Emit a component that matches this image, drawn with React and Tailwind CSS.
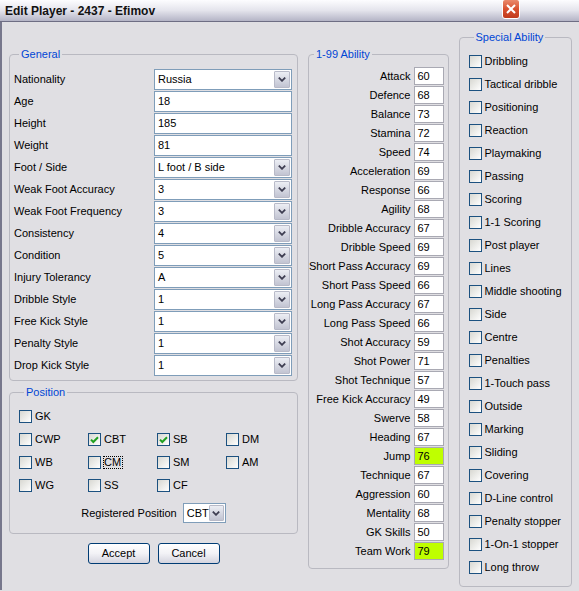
const general = [
  { label: "Nationality", value: "Russia", drop: true },
  { label: "Age", value: "18" },
  { label: "Height", value: "185" },
  { label: "Weight", value: "81" },
  { label: "Foot / Side", value: "L foot / B side", drop: true },
  { label: "Weak Foot Accuracy", value: "3", drop: true },
  { label: "Weak Foot Frequency", value: "3", drop: true },
  { label: "Consistency", value: "4", drop: true },
  { label: "Condition", value: "5", drop: true },
  { label: "Injury Tolerancy", value: "A", drop: true },
  { label: "Dribble Style", value: "1", drop: true },
  { label: "Free Kick Style", value: "1", drop: true },
  { label: "Penalty Style", value: "1", drop: true },
  { label: "Drop Kick Style", value: "1", drop: true },
];

const abilities = [
  ["Attack", 60], ["Defence", 68], ["Balance", 73], ["Stamina", 72],
  ["Speed", 74], ["Acceleration", 69], ["Response", 66], ["Agility", 68],
  ["Dribble Accuracy", 67], ["Dribble Speed", 69], ["Short Pass Accuracy", 69],
  ["Short Pass Speed", 66], ["Long Pass Accuracy", 67], ["Long Pass Speed", 66],
  ["Shot Accuracy", 59], ["Shot Power", 71], ["Shot Technique", 57],
  ["Free Kick Accuracy", 49], ["Swerve", 58], ["Heading", 67], ["Jump", 76, true],
  ["Technique", 67], ["Aggression", 60], ["Mentality", 68], ["GK Skills", 50],
  ["Team Work", 79, true],
];

const specials = [
  "Dribbling", "Tactical dribble", "Positioning", "Reaction", "Playmaking",
  "Passing", "Scoring", "1-1 Scoring", "Post player", "Lines", "Middle shooting",
  "Side", "Centre", "Penalties", "1-Touch pass", "Outside", "Marking", "Sliding",
  "Covering", "D-Line control", "Penalty stopper", "1-On-1 stopper", "Long throw",
];

const positions = [
  [["GK"]],
  [["CWP"], ["CBT", true], ["SB", true], ["DM"]],
  [["WB"], ["CM", false, true], ["SM"], ["AM"]],
  [["WG"], ["SS"], ["CF"]],
];

function DropButton() {
  return (
    <div className="w-[16px] h-full flex items-center justify-center border border-[#b8bac8] rounded-[1px] bg-gradient-to-b from-[#eceef4] to-[#c2c4d2]">
      <svg width="8" height="5" viewBox="0 0 8 5">
        <path d="M0.8 0.6 L4 3.8 L7.2 0.6" stroke="#3e3e52" strokeWidth="1.8" fill="none" />
      </svg>
    </div>
  );
}

function Field({ value, drop, className = "w-[138px] h-[21px]" }) {
  return (
    <div className={"flex border border-[#7f9db9] bg-white p-[1px] " + className}>
      <span className="flex-1 pl-[2px] flex items-center whitespace-nowrap">{value}</span>
      {drop && <DropButton />}
    </div>
  );
}

function Check({ checked }) {
  return (
    <span className="w-[13px] h-[13px] shrink-0 border border-[#1c5180] bg-gradient-to-br from-[#d8d8d2] to-white flex items-center justify-center">
      {checked && (
        <svg width="9" height="8" viewBox="0 0 9 8">
          <path d="M1 3.6 L3.3 6 L8 1.2" stroke="#21a121" strokeWidth="2" fill="none" />
        </svg>
      )}
    </span>
  );
}

function Group({ title, className, children }) {
  return (
    <fieldset className={"border border-[#b9b9c1] rounded-[4px] p-0 m-0 " + className}>
      <legend className="ml-[5px] px-[2px] text-[#0046d5] leading-[14px] whitespace-nowrap">{title}</legend>
      {children}
    </fieldset>
  );
}

function XpButton({ children }) {
  return (
    <button className="w-[62px] h-[21px] border border-[#003c74] rounded-[3px] bg-gradient-to-b from-white via-[#f2f2f6] to-[#d4d4de] text-black">
      {children}
    </button>
  );
}

export default function App() {
  return (
    <div
      className="w-[579px] h-[591px] overflow-hidden bg-[#e0dfe3] text-[11px] text-black"
      style={{ fontFamily: '"Liberation Sans", Arial, sans-serif' }}
    >
      {/* title bar */}
      <div className="h-[22px] flex items-center bg-gradient-to-b from-[#fdfdff] via-[#e4e4ec] to-[#b4b4c6] border-b border-[#6e6e84]">
        <span className="pl-[5px] text-[12px] font-bold text-[#111]">Edit Player - 2437 - Efimov</span>
        <div className="ml-auto mr-[59px] -mt-[3px] w-[18px] h-[20px] rounded-[3px] border border-white bg-gradient-to-b from-[#ea8a6c] via-[#d8502e] to-[#c03a1c] flex items-center justify-center">
          <svg width="10" height="10" viewBox="0 0 10 10">
            <path d="M1 1 L9 9 M9 1 L1 9" stroke="white" strokeWidth="2" />
          </svg>
        </div>
      </div>

      {/* body */}
      <div className="flex items-start h-[568px] border-l-2 border-[#77778c] pl-[7px]">
        {/* left column */}
        <div className="w-[289px] mt-[25px] flex flex-col">
          <Group title="General" className="pt-[8px] pb-[3px] pl-[4px] pr-[5px]">
            {general.map((r) => (
              <div key={r.label} className="h-[22px] flex items-start justify-between">
                <span className="leading-[21px] whitespace-nowrap">{r.label}</span>
                <Field value={r.value} drop={r.drop} />
              </div>
            ))}
          </Group>

          <Group title="Position" className="mt-[4px] pt-[6px] pb-[10px] pl-[9px]">
            {positions.map((row, i) => (
              <div key={i} className="h-[23px] flex items-center">
                {row.map(([name, checked, focus]) => (
                  <div key={name} className="w-[69px] flex items-center gap-[3px]">
                    <Check checked={checked} />
                    {focus ? (
                      <span className="border border-dotted border-black leading-[11px] -ml-[1px] pr-[1px]">{name}</span>
                    ) : (
                      <span>{name}</span>
                    )}
                  </div>
                ))}
              </div>
            ))}
            <div className="mt-[6px] flex items-center justify-center gap-[6px] pr-[9px]">
              <span className="whitespace-nowrap">Registered Position</span>
              <Field value="CBT" drop className="w-[43px] h-[20px]" />
            </div>
          </Group>

          <div className="mt-[9px] flex justify-center gap-[8px]">
            <XpButton>Accept</XpButton>
            <XpButton>Cancel</XpButton>
          </div>
        </div>

        {/* middle column */}
        <Group title="1-99 Ability" className="w-[140px] ml-[10px] mt-[25px] pt-[6px] pb-[7px] pr-[4px]">
          {abilities.map(([label, v, hi]) => (
            <div key={label} className="h-[19px] flex items-start justify-end gap-[3px]">
              <span className="leading-[18px] whitespace-nowrap">{label}</span>
              <span
                className={
                  "w-[30px] h-[18px] shrink-0 border border-[#a9a9b3] pl-[3px] leading-[16px] " +
                  (hi ? "bg-[#bfff00]" : "bg-white")
                }
              >
                {v}
              </span>
            </div>
          ))}
        </Group>

        {/* right column */}
        <Group title="Special Ability" className="w-[113px] ml-[10px] mt-[8px] pt-[6px] pb-[7px] pl-[9px]">
          {specials.map((s) => (
            <div key={s} className="h-[23px] flex items-center gap-[3px]">
              <Check />
              <span className="whitespace-nowrap">{s}</span>
            </div>
          ))}
        </Group>
      </div>
    </div>
  );
}
